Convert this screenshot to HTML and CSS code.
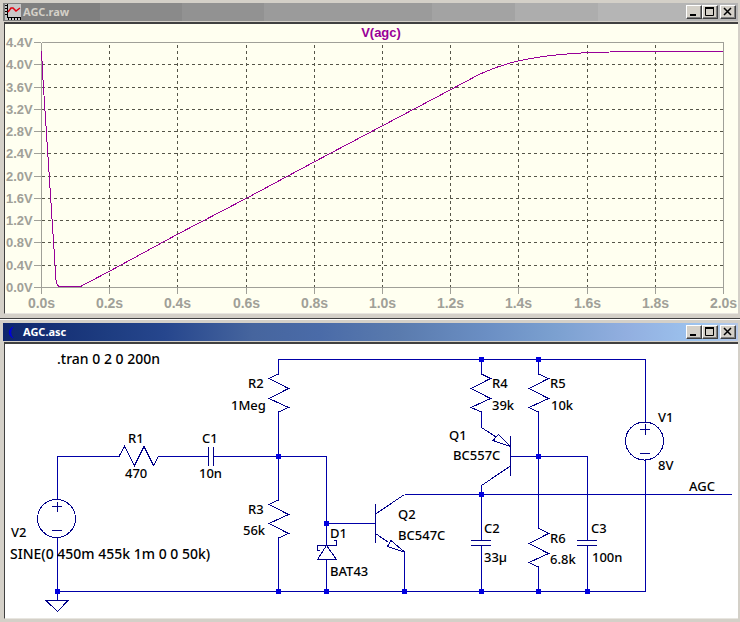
FILE: index.html
```
<!DOCTYPE html>
<html lang="en">
<head>
  <meta charset="UTF-8">
  <title>AGC</title>
  <link rel="stylesheet" href="styles.css">
</head>
<body>
<section class="window">
  <header class="titlebar inactive">
    <svg class="title-icon" width="16" height="16" viewBox="0 0 16 16">
      <rect width="16" height="16" fill="#c8c8c8"/>
      <path d="M2.500 0V14M2 13.500H16M0 1.500H2M0 4.500H2M0 7.500H2M0 10.500H2M3.500 14V16M6.500 14V16M9.500 14V16M12.500 14V16M15.500 14V16" stroke="#000" fill="none"/>
      <path d="M3 8L6 4L8 4L11 7L15 4" stroke="#e00010" stroke-width="1.500" fill="none"/>
    </svg>
    <h1>AGC.raw</h1>
    <div class="title-buttons">
      <button type="button" aria-label="Minimize"><svg width="13" height="12"><path d="M3 9H9" stroke="#000" stroke-width="2"/></svg></button>
      <button type="button" aria-label="Maximize"><svg width="13" height="12"><path d="M2 2H11" stroke="#000" stroke-width="2"/><path d="M2.500 2V9.500H10.500V2" stroke="#000" fill="none"/></svg></button>
      <button type="button" aria-label="Close"><svg width="13" height="12"><path d="M3 2L10 9M10 2L3 9" stroke="#000" stroke-width="1.500"/></svg></button>
    </div>
  </header>
  <main class="client plot">
    <svg viewBox="5 24 733 289" id="plot">
      <g id="grid" class="grid"></g>
      <path class="axis" d="M41.500 42.500H723.500V293M41.500 42.500V293M34 287.500H723.500"/>
      <g id="labels" class="axis-labels"></g>
      <path class="trace" d="M41.500 51L43 80L56 280Q57 286.500 60 286.500H80.500L109 271.500L177 234.500L246 198.500L314 162L382 126L450 90L480 74Q500 65 518 61C545 55 575 52.500 610 52L640 51.500H723"/>
      <text class="plot-title" x="381" y="37">V(agc)</text>
    </svg>
  </main>
</section>
<section class="window">
  <header class="titlebar active">
    <svg class="title-icon" width="16" height="16" viewBox="0 0 16 16"><path d="M8 3C3 6 3 11 8 14C5 11 5 6 8 3Z" fill="#0000e0" stroke="#0000e0"/></svg>
    <h1>AGC.asc</h1>
    <div class="title-buttons">
      <button type="button" aria-label="Minimize"><svg width="13" height="12"><path d="M3 9H9" stroke="#000" stroke-width="2"/></svg></button>
      <button type="button" aria-label="Maximize"><svg width="13" height="12"><path d="M2 2H11" stroke="#000" stroke-width="2"/><path d="M2.500 2V9.500H10.500V2" stroke="#000" fill="none"/></svg></button>
      <button type="button" aria-label="Close"><svg width="13" height="12"><path d="M3 2L10 9M10 2L3 9" stroke="#000" stroke-width="1.500"/></svg></button>
    </div>
  </header>
  <main class="client schematic">
    <svg viewBox="5 344 733 274">
      <g class="wire">
        <!-- supply and ground rails -->
        <path d="M278.500 374V359.500H645.500V422M645.500 460V591.500H57.500"/>
        <path d="M57.500 499V456.500H120M158 456.500H208M57.500 538V600"/>
        <path d="M213 456.500H326.500V545M326.500 559V591M326.500 523.500H375"/>
        <path d="M278.500 412V500M278.500 538V591"/>
        <path d="M404.500 494.500H732M404.500 552V591"/>
        <path d="M481.500 359V374M481.500 412V428M481.500 485V540M481.500 546V591"/>
        <path d="M538.500 359V374M538.500 412V528M538.500 567V591"/>
        <path d="M510.500 456.500H587.500V540M587.500 546V591"/>
      </g>
      <g class="part">
        <!-- resistors -->
        <path d="M119 456.500L124.500 446.500L134.500 465.500L144 446.500L153.500 465.500L158.500 456.500"/>
        <path d="M278.500 374L269 378.500L288.500 388.500L269 398.500L288.500 407.500L278.500 412"/>
        <path d="M278.500 500L269 504.500L288.500 514.500L269 523.500L288.500 533.500L278.500 538"/>
        <path d="M481.500 374L490.500 378.500L471 388.500L490.500 398.500L471 407.500L481.500 412"/>
        <path d="M538.500 374L548.500 378.500L529 388.500L548.500 398.500L529 407.500L538.500 412"/>
        <path d="M538.500 528L548.500 533.500L529 543.500L548.500 553.500L529 562.500L538.500 567"/>
        <!-- capacitors -->
        <path d="M208.500 447V466M213.500 447V466"/>
        <path d="M471 540.500H491M471 545.500H491"/>
        <path d="M577 540.500H597M577 545.500H597"/>
        <!-- sources -->
        <circle cx="56.500" cy="518.500" r="19"/>
        <path d="M52 506.500H62M57.500 502V512M52 530.500H62"/>
        <circle cx="644.500" cy="441" r="19"/>
        <path d="M640 429.500H650M645.500 424V435M640 453.500H650"/>
        <!-- ground -->
        <path d="M46 600.500H68L57.500 611.500Z"/>
        <!-- D1 -->
        <path d="M320 550.500H317.500V545.500H336.500V540.500H334M326.500 545.500L317.500 559.500H336.500Z"/>
        <!-- Q2 -->
        <path d="M375.500 504V543M375.500 514L404.500 494.500M375.500 533.500L388 542M404.500 552L391 540.500L387.500 546.500L404.500 552"/>
        <!-- Q1 -->
        <path d="M510.500 436V476M481.500 427.500L496 437M510.500 446.500L498.500 434.500L493 440.500L510.500 446.500M510.500 466L481.500 485.500"/>
      </g>
      <g id="junctions" class="junction"></g>
      <g class="text">
        <text class="directive" x="57" y="364">.tran 0 2 0 200n</text>
        <text x="128" y="443">R1</text>
        <text x="125" y="478">470</text>
        <text x="202" y="443">C1</text>
        <text x="199" y="478">10n</text>
        <text x="11" y="537">V2</text>
        <text class="directive" x="10" y="559">SINE(0 450m 455k 1m 0 0 50k)</text>
        <text x="248" y="388">R2</text>
        <text x="231" y="410">1Meg</text>
        <text x="248" y="514">R3</text>
        <text x="243" y="535">56k</text>
        <text x="330" y="538">D1</text>
        <text x="330" y="576">BAT43</text>
        <text x="398" y="519">Q2</text>
        <text x="398" y="540">BC547C</text>
        <text x="449" y="440">Q1</text>
        <text x="453" y="460">BC557C</text>
        <text x="492" y="388">R4</text>
        <text x="492" y="410">39k</text>
        <text x="550" y="388">R5</text>
        <text x="551" y="410">10k</text>
        <text x="484" y="533">C2</text>
        <text x="484" y="562">33µ</text>
        <text x="550" y="543">R6</text>
        <text x="550" y="564">6.8k</text>
        <text x="591" y="533">C3</text>
        <text x="592" y="562">100n</text>
        <text x="658" y="422">V1</text>
        <text x="658" y="470">8V</text>
        <text x="689" y="491">AGC</text>
      </g>
    </svg>
  </main>
</section>
<script src="script.js"></script>
</body>
</html>
```

FILE: styles.css
```
:root {
  --face: #d4d0c8;
  --paper: #fffff0;
  --wire: #0000a8;
}
body {
  margin: 0;
  background: #fff;
  font-family: "Noto Sans", sans-serif;
}
.window {
  background: var(--face);
  padding: 3px 2px 4px 3px;
  border-bottom: 1px solid #404040;
}
.window + .window {
  border-top: 1px solid #fff;
  border-bottom: 0;
  padding-bottom: 3px;
}
.titlebar {
  height: 18px;
  display: flex;
  align-items: center;
  padding: 0 2px;
}
.titlebar.inactive {
  background: linear-gradient(90deg,
    #808080 0 97px, #8a8a8a 97px 179px, #929292 179px 261px, #9b9b9b 261px 429px,
    #a3a3a3 429px 512px, #adadad 512px 595px, #b5b5b5 595px);
}
.titlebar.active {
  background: linear-gradient(90deg,
    #0f266c, #1d3c80 14%, #26468d 22%, #46659e 34%, #4a6ba8 43%,
    #5a7bae 54%, #6b8fc4 66%, #7ba0d0 75%, #92afe0 85%, #9dc4ef 95%, #b5c8e8);
}
.titlebar h1 {
  flex: 1;
  margin: 0 0 0 2px;
  font-size: 11px;
  line-height: 18px;
  font-weight: bold;
  color: #d4d0c8;
}
.titlebar.active h1 {
  color: #fff;
}
.title-buttons {
  display: flex;
}
.title-buttons button {
  width: 16px;
  height: 14px;
  padding: 0;
  border: 1px solid;
  border-color: #fff #404040 #404040 #fff;
  background: var(--face);
  box-shadow: inset -1px -1px #808080;
}
.title-buttons button:last-child {
  margin-left: 2px;
}
.title-buttons svg {
  display: block;
}
.client {
  margin-top: 1px;
  margin-left: 1px;
  border-top: 2px solid #404040;
  border-left: 1px solid #404040;
  border-bottom: 1px solid #e8e6e0;
}
.client > svg {
  display: block;
  width: 100%;
  height: auto;
}
.plot {
  background: var(--paper);
}
.schematic {
  background: #fff;
}
.grid {
  stroke: #555548;
  stroke-dasharray: 3 3;
  shape-rendering: crispEdges;
}
.axis {
  fill: none;
  stroke: #a0a098;
  shape-rendering: crispEdges;
}
.axis-labels {
  font: bold 13px "Liberation Sans", sans-serif;
  fill: #a0a098;
}
.axis-labels .tick-x {
  font-size: 14px;
  text-anchor: middle;
}
.axis-labels line {
  stroke: #a0a098;
  shape-rendering: crispEdges;
}
.trace {
  fill: none;
  stroke: #980098;
  shape-rendering: crispEdges;
}
.plot-title {
  font: bold 13px "Liberation Sans", sans-serif;
  fill: #980098;
  text-anchor: middle;
}
.wire, .part {
  fill: none;
  stroke: var(--wire);
  shape-rendering: crispEdges;
}
.part {
  stroke: #000088;
}
.junction {
  fill: #0000e0;
}
.text {
  font-size: 13px;
  font-weight: 500;
  fill: #000;
}
.text .directive {
  font-size: 14px;
}
```

FILE: script.js
```
const svgNS = 'http://www.w3.org/2000/svg';

function add(parent, tag, attrs, text) {
  const el = document.createElementNS(svgNS, tag);
  for (const key in attrs) el.setAttribute(key, attrs[key]);
  if (text) el.textContent = text;
  parent.appendChild(el);
}

const grid = document.getElementById('grid');
const labels = document.getElementById('labels');
const plot = { left: 41, right: 723, top: 42, bottom: 287 };

for (let i = 0; i <= 11; i++) {
  const y = Math.round(plot.bottom - i * (plot.bottom - plot.top) / 11) + 0.5;
  add(labels, 'text', { x: 6, y: y + 4 }, (i * 0.4).toFixed(1) + 'V');
  add(labels, 'line', { x1: 34, x2: 41, y1: y, y2: y });
  if (i > 0 && i < 11) add(grid, 'line', { x1: 42, x2: 723, y1: y, y2: y });
}

for (let i = 0; i <= 10; i++) {
  const x = Math.round(plot.left + i * (plot.right - plot.left) / 10) + 0.5;
  add(labels, 'text', { x: x, y: 308, class: 'tick-x' }, (i * 0.2).toFixed(1) + 's');
  add(labels, 'line', { x1: x, x2: x, y1: 288, y2: 294 });
  if (i > 0 && i < 10) add(grid, 'line', { x1: x, x2: x, y1: 45, y2: 287 });
}

const junctions = [
  [57, 591], [278, 456], [278, 591], [326, 523], [326, 591], [404, 591],
  [481, 359], [481, 494], [481, 591], [538, 359], [538, 456], [538, 591], [587, 591]
];
junctions.forEach(([x, y]) => {
  add(document.getElementById('junctions'), 'rect', { x: x - 2, y: y - 2, width: 5, height: 5 });
});
```
